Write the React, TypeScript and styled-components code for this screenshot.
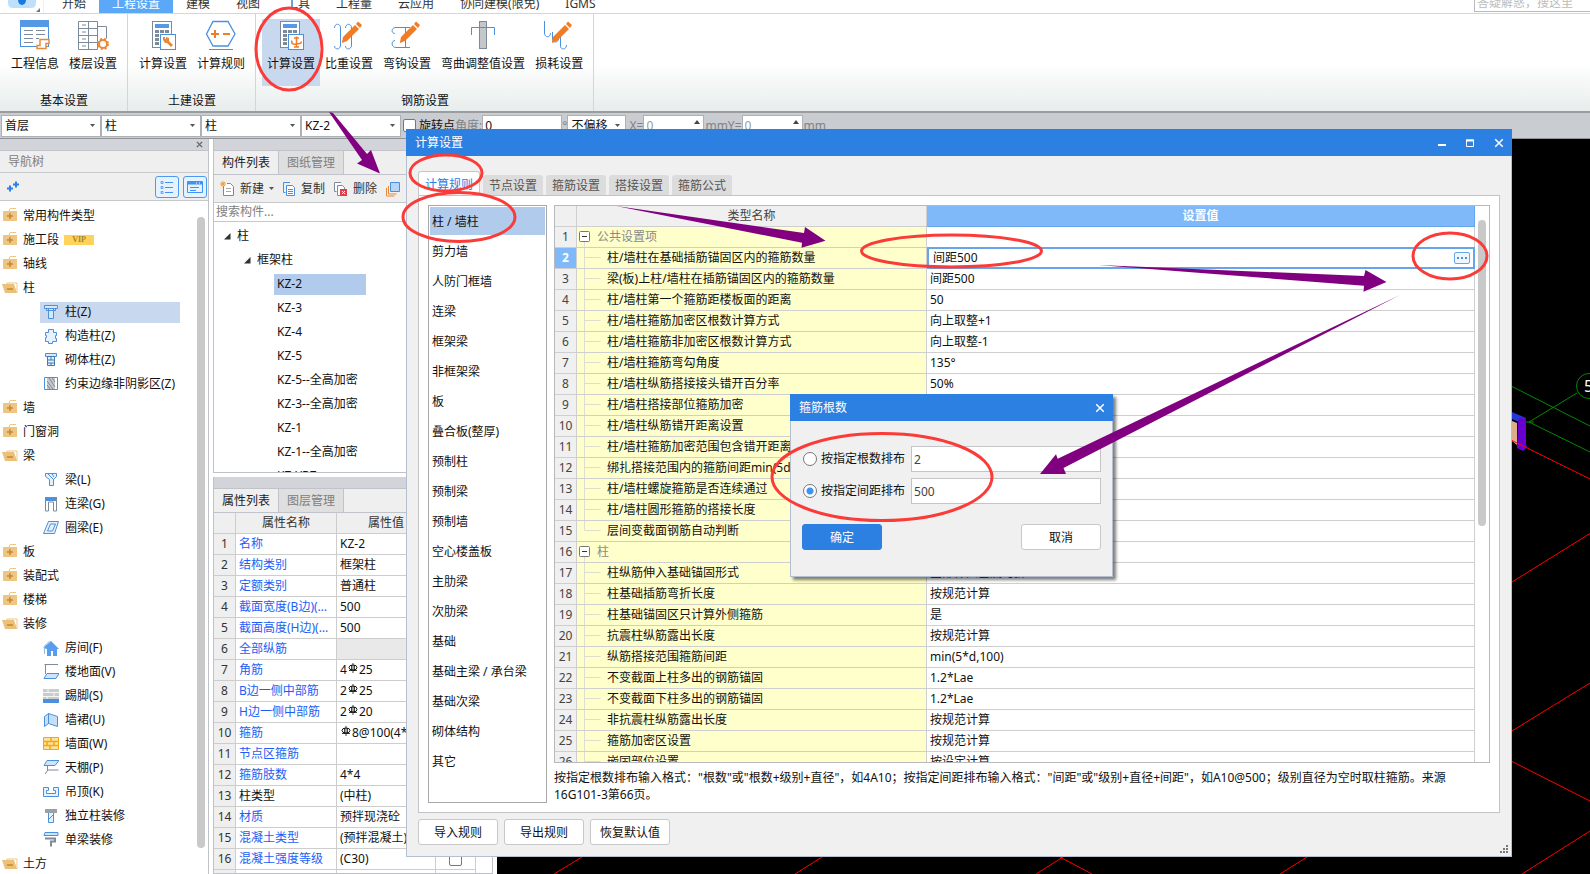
import React from "react";
import styled, { createGlobalStyle, css } from "styled-components";

const Global = createGlobalStyle`
  *, *::before, *::after { box-sizing: border-box; }
  body { margin: 0; overflow: hidden; }
  body, button, input, select, table {
    font-family: "Noto Sans", "Noto Sans CJK SC", sans-serif;
    font-size: 12px;
    line-height: 20px;
    color: #111;
  }
  button, input, select { margin: 0; padding: 0; border: 0; background: none; outline: none; }
  ul { list-style: none; margin: 0; padding: 0; }
`;

/* ---------- page frame ---------- */

const Page = styled.div`
  position: relative;
  display: flex;
  flex-direction: column;
  height: 100vh;
  overflow: hidden;
  background: #fff;
`;

const MenuBar = styled.nav`
  flex: none;
  display: flex;
  height: 14px;
  overflow: hidden;
  align-items: flex-end;
  border-bottom: 1px solid #d4d6d8;
`;

const Logo = styled.div`
  width: 49px;
  height: 14px;
  svg { display: block; }
`;

const MenuTab = styled.button<{ $active?: boolean }>`
  flex: none;
  height: 19px;
  padding: 0 13px;
  line-height: 20px;
  white-space: nowrap;
  color: ${(p) => (p.$active ? "#fff" : "#333")};
  background: ${(p) => (p.$active ? "#5ba7f8" : "transparent")};
`;

const HelpSearch = styled.input`
  width: 116px;
  height: 19px;
  margin-left: auto;
  margin-bottom: 1px;
  padding: 0 2px;
  border: 1px solid #b9b9b9;
  border-right: 0;
  &::placeholder { color: #bcbcbc; opacity: 1; }
`;

/* ---------- ribbon ---------- */

const Ribbon = styled.div`
  flex: none;
  display: flex;
  height: 99px;
  background: linear-gradient(#fff 50%, #e7edec);
  border-bottom: 2px solid #9a9c9e;
`;

const RibbonGroup = styled.section`
  display: flex;
  flex-direction: column;
  padding: 5px 5px 0 6px;
  border-right: 1px solid #d3d6d7;
`;

const RibbonButtons = styled.div`
  display: flex;
`;

const RibbonButton = styled.button<{ $active?: boolean }>`
  display: flex;
  flex-direction: column;
  align-items: center;
  height: 67px;
  padding: 0 5px;
  white-space: nowrap;
  background: ${(p) => (p.$active ? "#c8d8ef" : "transparent")};
  svg { display: block; margin-bottom: 1px; }
`;

const GroupName = styled.div`
  padding-top: 5px;
  text-align: center;
`;

/* ---------- option bar ---------- */

const OptionBar = styled.div`
  flex: none;
  display: flex;
  align-items: center;
  height: 26px;
  padding-left: 1px;
  white-space: nowrap;
  background: #c9ccd1;
  border-bottom: 1px solid #8f9296;
`;

const SelectWrap = styled.span<{ $w: number }>`
  display: grid;
  align-items: center;
  width: ${(p) => p.$w}px;
  > * { grid-area: 1 / 1; }
  > svg { justify-self: end; margin-right: 6px; pointer-events: none; }
`;

const Select = styled.select`
  appearance: none;
  width: 100%;
  height: 22px;
  padding-left: 3px;
  background: #fff;
  border: 1px solid #adb0b5;
`;

const RotateLabel = styled.label`
  display: flex;
  align-items: center;
  gap: 3px;
  margin-left: 2px;
`;

const CheckBox = styled.input`
  appearance: none;
  width: 13px;
  height: 13px;
  background: #fff;
  border: 1px solid #777;
  border-radius: 2px;
`;

const FieldLabel = styled.label`
  display: flex;
  align-items: center;
  color: #808388;
`;

const NumberBox = styled.input<{ $w: number; $dim?: boolean }>`
  width: ${(p) => p.$w}px;
  height: 22px;
  padding-left: 2px;
  background: #fff;
  border: 1px solid #adb0b5;
  color: ${(p) => (p.$dim ? "#9a9a9a" : "#111")};
`;

const SpinWrap = styled.span`
  display: grid;
  margin-right: 1px;
  > * { grid-area: 1 / 1; }
  > svg { justify-self: end; margin: 5px 4px 0 0; }
`;

/* ---------- docked panels ---------- */

const Workspace = styled.main`
  flex: 1;
  display: flex;
  min-height: 0;
`;

const NavPanel = styled.aside`
  flex: none;
  display: flex;
  flex-direction: column;
  width: 209px;
  min-height: 0;
  border-right: 1px solid #bfc2c7;
`;

const PanelStrip = styled.div`
  flex: none;
  display: flex;
  justify-content: flex-end;
  align-items: center;
  height: 12px;
  padding-right: 5px;
  background: #d2d4d9;
  border-bottom: 1px solid #c0c3c9;
`;

const CloseMini = styled.button`
  display: flex;
  svg { display: block; }
`;

const NavTitle = styled.div`
  flex: none;
  height: 22px;
  padding-left: 8px;
  line-height: 22px;
  color: #808080;
  background: #efefef;
  border-bottom: 1px solid #c6c9cc;
`;

const NavTools = styled.div`
  flex: none;
  display: flex;
  align-items: center;
  height: 28px;
  padding: 0 1px 0 6px;
  gap: 4px;
  background: #efefef;
  border-bottom: 1px solid #c6c9cc;
`;

const AddMark = styled.button`
  margin-right: auto;
  svg { display: block; }
`;

const ViewToggle = styled.button`
  display: grid;
  place-items: center;
  width: 24px;
  height: 22px;
  background: #e6f2ff;
  border: 1px solid #4a9af0;
  border-radius: 3px;
`;

const NavBody = styled.div`
  flex: 1;
  display: flex;
  min-height: 0;
  padding-top: 3px;
  overflow: hidden;
`;

const NavList = styled.ul`
  flex: 1;
`;

const NavRow = styled.li<{ $child?: boolean; $active?: boolean }>`
  display: flex;
  align-items: center;
  height: 24px;
  gap: 5px;
  padding-left: ${(p) => (p.$child ? 40 : 2)}px;
  white-space: nowrap;
  > span.entry {
    display: flex;
    align-items: center;
    gap: ${(p) => (p.$child ? 6 : 5)}px;
    width: ${(p) => (p.$child ? "140px" : "auto")};
    height: 21px;
    padding-left: ${(p) => (p.$child ? 3 : 0)}px;
    background: ${(p) => (p.$active ? "#c8d8ef" : "transparent")};
  }
  svg { flex: none; }
`;

const Vip = styled.span`
  width: 30px;
  height: 10px;
  background: #ffd25c;
  color: #a88528;
  font: bold 8px/10px "Liberation Serif", serif;
  text-align: center;
`;

const ScrollThumb = styled.div<{ $top: number; $bottom: number; $w: number }>`
  flex: none;
  width: ${(p) => p.$w}px;
  margin: ${(p) => p.$top}px 3px ${(p) => p.$bottom}px 3px;
  background: #c9c9c9;
  border-radius: 4px;
`;

const MidColumn = styled.div`
  flex: none;
  display: flex;
  flex-direction: column;
  gap: 4px;
  width: 280px;
  margin: 0 4px;
  min-height: 0;
`;

const DockPanel = styled.section<{ $h?: number }>`
  display: flex;
  flex-direction: column;
  flex: ${(p) => (p.$h ? "none" : "1")};
  height: ${(p) => (p.$h ? `${p.$h}px` : "auto")};
  min-height: 0;
  overflow: hidden;
  border: 1px solid #bfc2c7;
  border-top: 0;
  background: #fff;
`;

const DockTabs = styled.div`
  flex: none;
  display: flex;
  height: 24px;
  background: #efefef;
  border-bottom: 1px solid #c0c3c9;
`;

const DockTab = styled.button<{ $active?: boolean }>`
  height: 23px;
  padding: 1px 8px 0;
  color: ${(p) => (p.$active ? "#222" : "#808080")};
  background: ${(p) => (p.$active ? "#efefef" : "#dfdfdf")};
  border-right: 1px solid #c0c3c9;
`;

const ListTools = styled.div`
  flex: none;
  display: flex;
  align-items: center;
  height: 28px;
  padding-left: 6px;
  white-space: nowrap;
  background: #efefef;
  border-bottom: 1px solid #c6c9cc;
`;

const ToolButton = styled.button`
  display: flex;
  align-items: center;
  gap: 5px;
  margin-right: 8px;
  color: #333;
`;

const SearchBox = styled.input`
  flex: none;
  width: 100%;
  height: 19px;
  padding-left: 2px;
  border-bottom: 1px solid #c6c9cc;
  &::placeholder { color: #808080; opacity: 1; }
`;

const PartTree = styled.ul`
  padding-top: 2px;
`;

const PartRow = styled.li<{ $level: number; $active?: boolean }>`
  display: flex;
  align-items: center;
  gap: 6px;
  height: 24px;
  padding-left: ${(p) => [10, 30, 60][p.$level]}px;
  white-space: nowrap;
  > span {
    height: 21px;
    ${(p) => p.$level === 2 && css`width: 92px; padding-left: 3px;`}
    background: ${(p) => (p.$active ? "#b1cbed" : "transparent")};
  }
`;

const PropTable = styled.table`
  table-layout: fixed;
  width: 262px;
  border-collapse: separate;
  border-spacing: 0;
  th, td {
    height: 21px;
    padding: 0 3px;
    font-weight: normal;
    overflow: hidden;
    text-overflow: ellipsis;
    white-space: nowrap;
    border-right: 1px solid #cdcdcd;
    border-bottom: 1px solid #cdcdcd;
  }
  th { background: #efefef; color: #333; text-align: center; padding: 0; }
  td:last-child { text-align: center; }
  td input { vertical-align: middle; }
`;

const PropName = styled.td<{ $plain?: boolean }>`
  color: ${(p) => (p.$plain ? "#111" : "#1c5ef5")};
`;

const PropValue = styled.td<{ $shade?: boolean }>`
  background: ${(p) => (p.$shade ? "#e9e9e9" : "#fff")};
`;

const Viewport = styled.div`
  flex: 1;
  min-width: 0;
  overflow: hidden;
  background: #000;
  svg { display: block; }
`;

/* ---------- main dialog ---------- */

const Dialog = styled.section`
  position: absolute;
  top: 129px;
  left: 406px;
  right: 78px;
  bottom: 17px;
  display: flex;
  flex-direction: column;
  background: #f0f0f0;
  border: 1px solid #b4c0d2;
  border-top: 0;
`;

const TitleBar = styled.header`
  flex: none;
  display: flex;
  align-items: center;
  height: 27px;
  margin: 0 -1px;
  padding: 0 8px 0 9px;
  gap: 18px;
  color: #fff;
  background: #2c80e2;
  > span { margin-right: auto; }
`;

const WindowButton = styled.button`
  width: 10px;
  height: 10px;
  svg { display: block; }
`;

const DialogBody = styled.div`
  flex: 1;
  display: flex;
  flex-direction: column;
  min-height: 0;
  padding: 15px 11px 0;
`;

const TabRow = styled.div`
  flex: none;
  display: flex;
  align-items: flex-end;
  gap: 3px;
  height: 24px;
`;

const RuleTab = styled.button<{ $active?: boolean }>`
  height: 20px;
  padding: 1px 6px 0;
  line-height: 19px;
  color: #555;
  background: #dcdcdc;
  border-radius: 3px 3px 0 0;
  ${(p) => p.$active && css`
    height: 24px;
    color: #2c80e2;
    background: #fff;
    border: 1px solid #c6c6c6;
    border-bottom: 0;
  `}
`;

const RulePanel = styled.div`
  flex: 1;
  display: flex;
  gap: 7px;
  min-height: 0;
  padding: 9px;
  background: #fff;
  border: 1px solid #c3c3c8;
`;

const KindList = styled.ul`
  flex: none;
  width: 119px;
  padding: 1px;
  border: 1px solid #a9a9a9;
`;

const KindRow = styled.li<{ $active?: boolean }>`
  height: 30px;
  padding-left: 2px;
  line-height: 30px;
  background: ${(p) => (p.$active ? "linear-gradient(#b1cbed 28px, #fff 28px)" : "transparent")};
  white-space: nowrap;
`;

const RuleColumn = styled.div`
  flex: 1;
  display: flex;
  flex-direction: column;
  min-width: 0;
`;

const GridBox = styled.div`
  flex: 1;
  display: flex;
  align-items: stretch;
  min-height: 0;
  overflow: hidden;
  border: 1px solid #b9b9bd;
`;

const GridHolder = styled.div`
  flex: 1;
  min-width: 0;
`;

const RuleTable = styled.table`
  table-layout: fixed;
  width: 100%;
  border-collapse: separate;
  border-spacing: 0;
  th, td {
    height: 21px;
    padding: 0;
    font-weight: normal;
    white-space: nowrap;
    border-right: 1px solid #cfcfcf;
    border-bottom: 1px solid #cfcfcf;
  }
  thead th {
    color: #444;
    background: #f0f0f0;
  }
  thead th:last-child {
    color: #fff;
    font-weight: bold;
    background: #80b9f9;
    border-color: #66a5ea;
  }
`;

const IndexCell = styled.td<{ $active?: boolean }>`
  text-align: center;
  color: ${(p) => (p.$active ? "#fff" : "#444")};
  font-weight: ${(p) => (p.$active ? "bold" : "normal")} !important;
  background: ${(p) => (p.$active ? "#80b9f9" : "#f0f0f0")};
`;

const NameCell = styled.td`
  background: #ffffcb;
  > div { display: flex; align-items: center; height: 20px; }
  svg { flex: none; display: block; }
`;

const GroupText = styled.span`
  color: #8a8a8a;
  padding-left: 6px;
`;

const ValueCell = styled.td<{ $active?: boolean }>`
  > div {
    display: flex;
    align-items: center;
    justify-content: space-between;
    height: 20px;
    padding-left: 3px;
    ${(p) => p.$active && css`
      height: 22px;
      margin: -1px -1px -1px 0;
      padding: 0 3px 0 4px;
      border: 2px solid #66a5ea;
    `}
  }
`;

const MoreButton = styled.button`
  display: flex;
  align-items: center;
  justify-content: center;
  gap: 2px;
  width: 16px;
  height: 12px;
  background: #eef6ff;
  border: 1px solid #66a5ea;
  border-radius: 2px;
  i { width: 2px; height: 2px; background: #4a90d9; }
`;

const Hint = styled.p`
  flex: none;
  height: 40px;
  margin: 0;
  padding-top: 6px;
  line-height: 17px;
`;

const Footer = styled.footer`
  flex: none;
  display: flex;
  align-items: flex-start;
  gap: 6px;
  height: 43px;
  padding-top: 6px;
`;

const Button = styled.button<{ $primary?: boolean }>`
  width: 80px;
  height: 26px;
  padding-top: 1px;
  border: 1px solid ${(p) => (p.$primary ? "#2c80e2" : "#c8c8c8")};
  border-radius: 3px;
  color: ${(p) => (p.$primary ? "#fff" : "#111")};
  background: ${(p) => (p.$primary ? "#2c80e2" : "#fff")};
`;

const Grip = styled.svg`
  align-self: flex-end;
  margin: 0 -8px 3px auto;
`;

/* ---------- small dialog ---------- */

const CountDialog = styled.form`
  position: absolute;
  top: 394px;
  left: 790px;
  width: 323px;
  background: #f0f0f0;
  border: 1px solid #b4c0d2;
  border-top: 0;
  box-shadow: 3px 3px 3px rgba(0, 0, 0, 0.5);
`;

const CountBody = styled.div`
  display: flex;
  flex-direction: column;
  gap: 6px;
  padding: 25px 11px 26px;
`;

const CountRow = styled.div`
  display: flex;
  align-items: center;
  gap: 6px;
  padding-left: 1px;
  label { display: flex; align-items: center; gap: 4px; white-space: nowrap; }
`;

const Radio = styled.input`
  appearance: none;
  width: 14px;
  height: 14px;
  border: 1px solid #777;
  border-radius: 50%;
  background: #fff;
  &:checked { background: radial-gradient(circle, #3f93f5 0 3px, #fff 4px); }
`;

const CountInput = styled.input`
  flex: 1;
  min-width: 0;
  height: 26px;
  padding-left: 2px;
  color: #444;
  background: #fff;
  border: 1px solid #c3c3c8;
`;

const CountActions = styled.div`
  display: flex;
  justify-content: space-between;
  padding-top: 14px;
`;

const Annotations = styled.svg`
  position: absolute;
  top: 0;
  left: 0;
  pointer-events: none;
`;

/* ---------- icons ---------- */

const B = "#4a90dc";
const G = "#7c8a99";
const O = "#e8893a";

const Caret = () => (
  <svg width="5" height="3"><path d="M0 0h5L2.500 3z" fill="#555" /></svg>
);
const SpinUp = () => (
  <svg width="6" height="4"><path d="M3 0l3 4H0z" fill="#444" /></svg>
);
const Cross = ({ size = 8, color = "#fff", w = 1.6 }: { size?: number; color?: string; w?: number }) => (
  <svg width={size} height={size} viewBox="0 0 8 8"><path d="M1 1l6 6M7 1L1 7" stroke={color} strokeWidth={w} /></svg>
);

const Calculator = ({ children }: { children: React.ReactNode }) => (
  <svg width="30" height="34" viewBox="0 0 30 34" fill="none">
    <rect x="4.500" y="2.500" width="19" height="26" fill="#fff" stroke={G} />
    <rect x="7" y="5" width="14" height="4" fill="#5599e6" />
    <g fill={G}>
      {[11, 15, 19, 23].map((y) => [7, 12, 17].map((x) => <rect key={`${x}${y}`} x={x} y={y} width="4" height="3" />))}
    </g>
    <rect x="12.500" y="15.500" width="15" height="15" fill="#fff" stroke={B} />
    {children}
  </svg>
);

const Pencil = () => (
  <g fill="#f07c28" stroke="none">
    <path d="M9 23l1-5L22 6l4 4-12 12-5 2z" />
    <path d="M23 5l2-2.500 4 3.500-2 3z" />
  </g>
);

const ribbonIcons: Record<string, React.ReactNode> = {
  info: (
    <svg width="32" height="34" viewBox="0 0 32 34" fill="none">
      <rect x="1.500" y="2.500" width="28" height="25" fill="#fff" stroke={B} />
      <path d="M1 1h29v7H1z" fill="#5599e6" />
      <path d="M5 11.500h9M17 11.500h9M5 15.500h9M17 15.500h9M5 19.500h9M17 19.500h3M5 23.500h9" stroke={G} />
      <path d="M21 20.500h9v4h-3v5h-9v-3h3z" fill="#fff" stroke={O} strokeWidth="1.500" />
    </svg>
  ),
  floors: (
    <svg width="32" height="34" viewBox="0 0 32 34" fill="none">
      <path d="M1.500 2.500h19v28h-19zM1.500 9.500h19M1.500 16.500h19M1.500 23.500h19M11.500 2.500v28M20.500 7.500h9v12M5 6h4M5 13h4M5 20h4M5 27h4" stroke={G} />
      <circle cx="26" cy="25" r="4" fill="#fff" stroke={O} strokeWidth="2" />
      <circle cx="26" cy="25" r="5" stroke={O} strokeWidth="2" strokeDasharray="2 2" />
    </svg>
  ),
  wrench: (
    <Calculator><path d="M15 18h2v2h1v-2l3 1v3l4 4-2 2-4-4h-2l-2-3z" fill={O} /></Calculator>
  ),
  rule: (
    <svg width="32" height="34" viewBox="0 0 32 34" fill="none">
      <path d="M8 2.500h15L30 15l-7 12H8L1.500 15z" stroke={B} strokeWidth="1.300" />
      <path d="M6 15h8M10 11v8M18 15h7" stroke="#f07c28" strokeWidth="2" />
      <path d="M4 30.500h24" stroke={B} />
    </svg>
  ),
  rebar: (
    <Calculator><path d="M20.500 17.500v11M16 21.500c-1 3 1 4 4 3.500s6 0 5-2.500M18 19h5M18 28h5" stroke="#f07c28" strokeWidth="1.500" /></Calculator>
  ),
  weight: (
    <svg width="32" height="34" viewBox="0 0 32 34" fill="none" stroke={B}>
      <path d="M1.500 9c0-5 6-5 6 0v17c0 5-6 5-6 1M12.500 9c0-5 6-5 6 0v17c0 5-6 5-6 1" /><Pencil />
    </svg>
  ),
  hook: (
    <svg width="32" height="34" viewBox="0 0 32 34" fill="none" stroke={B}>
      <path d="M19 8.500H5c-5 0-5 6-1 6M19 28.500H5c-5 0-5-7-1-7M14.500 8v21M12 17.500h6" /><Pencil />
    </svg>
  ),
  bend: (
    <svg width="32" height="34" viewBox="0 0 32 34" fill="none">
      <rect x="12.500" y="2.500" width="7" height="27" fill="#c4c7ca" stroke={G} />
      <path d="M4.500 16V8.500h23V16" stroke={B} />
    </svg>
  ),
  loss: (
    <svg width="32" height="34" viewBox="0 0 32 34" fill="none" stroke={B}>
      <path d="M1.500 2v12c0 5 6 5 6 0M9.500 13v7c0 4 6 4 6 0M17.500 16v11c0 4 6 4 6-1" /><Pencil />
    </svg>
  ),
};

const FolderClosed = () => (
  <svg width="16" height="16" viewBox="0 0 16 16">
    <path d="M1 3h14v10H1zM8 0h6v1H8zM7 1h1v2H7z" fill="#efc681" />
    <path d="M8 5v6M5 8h6" stroke="#c08a34" strokeWidth="1.500" />
  </svg>
);
const FolderOpen = () => (
  <svg width="16" height="16" viewBox="0 0 16 16">
    <path d="M5 4V3h10v10" fill="none" stroke="#efc681" /><path d="M0 4h12l3 9H3z" fill="#ecc078" />
    <path d="M5 9h6" stroke="#c08a34" strokeWidth="1.500" />
  </svg>
);

const partIcons: Record<string, React.ReactNode> = {
  column: <path d="M1.500 1.500h13v3h-13zM5.500 5v9.500h5V5M3.500 4.500v2h9v-2" fill="#d8e8fa" stroke={B} />,
  frame: <path d="M5.500 1.500h5v3h3v3h-1v3h1v3h-4v2h-4v-2h-3v-4h1v-2h-1v-3h3z" fill="#e8f2fd" stroke={B} />,
  brick: <><path d="M2.500 1.500h11v3h-11z" fill="#d8e8fa" stroke={B} /><path d="M4.500 4.500h7v9h-7zM4.500 8h7M4.500 11h7M8 5v3M8 11v3" fill="#e6effa" stroke="#3f78b8" /></>,
  hatch: <><path d="M1.500 1.500h13v12h-13z" fill="#fff" stroke={B} /><path d="M4 2h8v11H4z" fill="#c5c8cc" /><path d="M4 5l6 8M4 9l3 4M6 2l6 9M9 2l3 4" stroke="#858a90" /></>,
  beamL: <path d="M2.500 1.500h11v3l-3 3v6h-4v-6l-4-3zM5 2l6 6M9 2l2 3" fill="#e6f1fc" stroke={B} />,
  beamG: <><path d="M2 1h12v4H2z" fill={B} /><path d="M2.500 5v10h3V6h5v9h3V1.500h-11z" fill="none" stroke={G} /></>,
  ring: <path d="M5.500 1.500h10l-4 12h-11zM7.500 4h5l-3 7h-5z" fill="#e6f1fc" stroke={B} />,
  room: <><path d="M0 8l8-7 8 8h-2v7h-4v-5H8v5H4V9z" fill="#5a9dec" /><path d="M1.500 14V6l5-5" fill="none" stroke="#8abbf2" /></>,
  floor: <><path d="M15 .500H1.500M2.500 1v9" fill="none" stroke={G} /><path d="M4 9.500h12l-3 5H1z" fill="#cfe4fb" stroke={B} /></>,
  skirt: <><path d="M0 1h16v10H0z" fill="#c9cbcd" /><path d="M0 4.500h16M0 8.500h16M5 1v3M11 5v3M4 9v3" stroke="#f5f5f5" /><path d="M0 11h16v4H0z" fill="#4a90dc" /></>,
  dado: <path d="M1.500 4.500l4-3v10l-4 3zM5.500 1.500l9 3v10l-9-3z" fill="#c5defa" stroke={B} />,
  wall: <><path d="M.500 1.500h15v12h-15z" fill="#ffe29a" stroke="#f3a712" /><path d="M1 5.500h14M1 9.500h14M8 2v3M4 6v3M11 6v3M7 10v4" stroke="#f3a712" strokeWidth="1.500" /></>,
  ceiling: <><path d="M4 .500h12l-4 5H1z" fill="#cfe4fb" stroke={B} /><path d="M4.500 6v4h11M2 14l3-4" fill="none" stroke={G} /></>,
  hang: <path d="M.500 3.500h5v3h-2v3h9v-3h-2v-3h5v9H.500z" fill="#e6f1fc" stroke={B} />,
  columnFit: <><path d="M2 1h12v4H2z" fill="#9ba1a8" /><path d="M5.500 5v9.500h5V5M5 12l5-5" fill="#e6f1fc" stroke={B} /></>,
  beamFit: <><path d="M2 .500h13v3H1z" fill="#cfe4fb" stroke={B} /><path d="M2 6.500h10v3H8v5" fill="none" stroke={G} strokeWidth="2" /></>,
};

/* rebar grade mark used in front of a bar diameter */
const Grade = () => (
  <svg width="12" height="11" viewBox="0 0 12 11" fill="none" stroke="#111">
    <ellipse cx="6" cy="4.500" rx="4" ry="2.500" /><path d="M6 0v10M2 7.500h8M4.500 2v6M7.500 2v6" strokeWidth=".8" />
  </svg>
);

/* ---------- data ---------- */

const menu = ["开始", "工程设置", "建模", "视图", "工具", "工程量", "云应用", "协同建模(限免)", "IGMS"];

const groups = [
  { name: "基本设置", items: [["工程信息", "info"], ["楼层设置", "floors"]] },
  { name: "土建设置", items: [["计算设置", "wrench"], ["计算规则", "rule"]] },
  { name: "钢筋设置", items: [["计算设置", "rebar"], ["比重设置", "weight"], ["弯钩设置", "hook"], ["弯曲调整值设置", "bend"], ["损耗设置", "loss"]] },
];

type NavItem = { t: string; open?: boolean; icon?: string; vip?: boolean };
const nav: NavItem[] = [
  { t: "常用构件类型" }, { t: "施工段", vip: true }, { t: "轴线" },
  { t: "柱", open: true },
  { t: "柱(Z)", icon: "column" }, { t: "构造柱(Z)", icon: "frame" }, { t: "砌体柱(Z)", icon: "brick" }, { t: "约束边缘非阴影区(Z)", icon: "hatch" },
  { t: "墙" }, { t: "门窗洞" }, { t: "梁", open: true },
  { t: "梁(L)", icon: "beamL" }, { t: "连梁(G)", icon: "beamG" }, { t: "圈梁(E)", icon: "ring" },
  { t: "板" }, { t: "装配式" }, { t: "楼梯" }, { t: "装修", open: true },
  { t: "房间(F)", icon: "room" }, { t: "楼地面(V)", icon: "floor" }, { t: "踢脚(S)", icon: "skirt" }, { t: "墙裙(U)", icon: "dado" },
  { t: "墙面(W)", icon: "wall" }, { t: "天棚(P)", icon: "ceiling" }, { t: "吊顶(K)", icon: "hang" },
  { t: "独立柱装修", icon: "columnFit" }, { t: "单梁装修", icon: "beamFit" }, { t: "土方", open: true },
];

const parts: [string, number][] = [
  ["柱", 0], ["框架柱", 1], ["KZ-2", 2], ["KZ-3", 2], ["KZ-4", 2], ["KZ-5", 2], ["KZ-5--全高加密", 2],
  ["KZ-3--全高加密", 2], ["KZ-1", 2], ["KZ-1--全高加密", 2], ["KZ-YBZ", 2],
];

const props: [string, React.ReactNode][] = [
  ["名称", "KZ-2"], ["结构类别", "框架柱"], ["定额类别", "普通柱"], ["截面宽度(B边)(mm)", "500"], ["截面高度(H边)(mm)", "500"],
  ["全部纵筋", ""], ["角筋", <>4<Grade />25</>], ["B边一侧中部筋", <>2<Grade />25</>], ["H边一侧中部筋", <>2<Grade />20</>],
  ["箍筋", <><Grade />8@100(4*4)</>], ["节点区箍筋", ""], ["箍筋肢数", "4*4"], ["柱类型", "(中柱)"], ["材质", "预拌现浇砼"],
  ["混凝土类型", "(预拌混凝土)"], ["混凝土强度等级", "(C30)"], ["", ""],
];

const ruleTabs = ["计算规则", "节点设置", "箍筋设置", "搭接设置", "箍筋公式"];

const kinds = ["柱 / 墙柱", "剪力墙", "人防门框墙", "连梁", "框架梁", "非框架梁", "板", "叠合板(整厚)", "预制柱", "预制梁", "预制墙",
  "空心楼盖板", "主肋梁", "次肋梁", "基础", "基础主梁 / 承台梁", "基础次梁", "砌体结构", "其它"];

type Rule = { n: string; v?: string; group?: boolean; last?: boolean };
const rules: Rule[] = [
  { n: "公共设置项", group: true },
  { n: "柱/墙柱在基础插筋锚固区内的箍筋数量", v: "间距500" },
  { n: "梁(板)上柱/墙柱在插筋锚固区内的箍筋数量", v: "间距500" },
  { n: "柱/墙柱第一个箍筋距楼板面的距离", v: "50" },
  { n: "柱/墙柱箍筋加密区根数计算方式", v: "向上取整+1" },
  { n: "柱/墙柱箍筋非加密区根数计算方式", v: "向上取整-1" },
  { n: "柱/墙柱箍筋弯勾角度", v: "135°" },
  { n: "柱/墙柱纵筋搭接接头错开百分率", v: "50%" },
  { n: "柱/墙柱搭接部位箍筋加密" },
  { n: "柱/墙柱纵筋错开距离设置" },
  { n: "柱/墙柱箍筋加密范围包含错开距离" },
  { n: "绑扎搭接范围内的箍筋间距min(5d,100)" },
  { n: "柱/墙柱螺旋箍筋是否连续通过" },
  { n: "柱/墙柱圆形箍筋的搭接长度" },
  { n: "层间变截面钢筋自动判断", last: true },
  { n: "柱", group: true },
  { n: "柱纵筋伸入基础锚固形式", v: "全部伸入基底弯折" },
  { n: "柱基础插筋弯折长度", v: "按规范计算" },
  { n: "柱基础锚固区只计算外侧箍筋", v: "是" },
  { n: "抗震柱纵筋露出长度", v: "按规范计算" },
  { n: "纵筋搭接范围箍筋间距", v: "min(5*d,100)" },
  { n: "不变截面上柱多出的钢筋锚固", v: "1.2*Lae" },
  { n: "不变截面下柱多出的钢筋锚固", v: "1.2*Lae" },
  { n: "非抗震柱纵筋露出长度", v: "按规范计算" },
  { n: "箍筋加密区设置", v: "按规范计算" },
  { n: "嵌固部位设置", v: "按设定计算" },
];

const TreeBranch = ({ group, last }: { group?: boolean; last?: boolean }) =>
  group ? (
    <svg width="14" height="20" fill="none">
      <path d="M7.500 15v5" stroke="#ddd" />
      <rect x="2.500" y="4.500" width="10" height="10" rx="1" fill="#fff" stroke="#777" />
      <path d="M5 9.500h5" stroke="#333" />
    </svg>
  ) : (
    <svg width="30" height="20" fill="none">
      <path d={last ? "M7.500 0v9.500h16" : "M7.500 0v20M7.500 9.500h16"} stroke="#ddddd0" />
    </svg>
  );

const Combo = ({ w, value }: { w: number; value: string }) => (
  <SelectWrap $w={w}>
    <Select aria-label={value} defaultValue={value}><option>{value}</option></Select>
    <Caret />
  </SelectWrap>
);

export default function App() {
  return (
    <Page>
      <Global />
      <MenuBar>
        <Logo>
          <svg width="44" height="14">
            <path d="M8 0h28v4q0 5-5 5H13q-5 0-5-5z" fill="#bfe0fb" />
            <ellipse cx="22" cy="1" rx="4" ry="5" fill="#1979e0" />
            <path d="M40 9v4h-4z" fill="#777" /><path d="M44 0v14" stroke="#ddd" />
          </svg>
        </Logo>
        {menu.map((m, i) => <MenuTab key={m} $active={i === 1}>{m}</MenuTab>)}
        <HelpSearch aria-label="搜索" placeholder="答疑解惑，搜这里" />
      </MenuBar>

      <Ribbon>
        {groups.map((g) => (
          <RibbonGroup key={g.name}>
            <RibbonButtons>
              {g.items.map(([label, icon]) => (
                <RibbonButton key={icon} $active={icon === "rebar"}>{ribbonIcons[icon]}{label}</RibbonButton>
              ))}
            </RibbonButtons>
            <GroupName>{g.name}</GroupName>
          </RibbonGroup>
        ))}
      </Ribbon>

      <OptionBar>
        <Combo w={100} value="首层" /><Combo w={100} value="柱" /><Combo w={100} value="柱" /><Combo w={100} value="KZ-2" />
        <RotateLabel><CheckBox type="checkbox" />旋转点</RotateLabel>
        <FieldLabel>角度:<NumberBox $w={80} defaultValue="0" />°</FieldLabel>
        <Combo w={59} value="不偏移" />
        <FieldLabel>&nbsp;X=<SpinWrap><NumberBox $w={61} $dim defaultValue="0" /><SpinUp /></SpinWrap>mm</FieldLabel>
        <FieldLabel>Y=<SpinWrap><NumberBox $w={61} $dim defaultValue="0" /><SpinUp /></SpinWrap>mm</FieldLabel>
      </OptionBar>

      <Workspace>
        <NavPanel>
          <PanelStrip><CloseMini aria-label="关闭"><Cross size={7} color="#666" /></CloseMini></PanelStrip>
          <NavTitle>导航树</NavTitle>
          <NavTools>
            <AddMark aria-label="添加">
              <svg width="14" height="12" stroke="#2c80e2" strokeWidth="2"><path d="M1 7.500h6M4 4.500v6M7 3.500h6M10 .500v6" /></svg>
            </AddMark>
            <ViewToggle aria-label="列表">
              <svg width="14" height="14" fill="none" stroke="#3f93f5"><path d="M5 2.500h8M5 7.500h8M5 12.500h8" /><path d="M1 1.500h2v2H1zM1 6.500h2v2H1zM1 11.500h2v2H1z" strokeWidth=".8" /></svg>
            </ViewToggle>
            <ViewToggle aria-label="面板">
              <svg width="16" height="14" fill="none" stroke="#3f93f5"><path d="M.500 1.500h15v11H.500zM3 7.500h9M3 10.500h6" /><path d="M1 3h14" strokeWidth="3" /><path d="M9 3h1M12 3h1" stroke="#fff" /></svg>
            </ViewToggle>
          </NavTools>
          <NavBody>
            <NavList>
              {nav.map((n) => (
                <NavRow key={n.t} $child={!!n.icon} $active={n.t === "柱(Z)"}>
                  <span className="entry">
                    {n.icon ? <svg width="16" height="16" viewBox="0 0 16 16">{partIcons[n.icon]}</svg> : n.open ? <FolderOpen /> : <FolderClosed />}
                    {n.t}
                  </span>
                  {n.vip && <Vip>VIP</Vip>}
                </NavRow>
              ))}
            </NavList>
            <ScrollThumb $top={13} $bottom={26} $w={8} />
          </NavBody>
        </NavPanel>

        <MidColumn>
          <DockPanel $h={334}>
            <PanelStrip />
            <DockTabs><DockTab $active>构件列表</DockTab><DockTab>图纸管理</DockTab></DockTabs>
            <ListTools>
              <ToolButton>
                <svg width="15" height="16" fill="none"><path d="M3.500 5v9.500h10v-9l-3-3H7" fill="#fff" stroke={G} /><path d="M6 7.500h5M6 10.500h5" stroke="#aaa" /><path d="M0 3h6M3 0v6M1 1l4 4M5 1L1 5" stroke="#f09a2e" /></svg>
                新建
                <Caret />
              </ToolButton>
              <ToolButton>
                <svg width="14" height="16" fill="none" stroke={B}><path d="M8 1.500H1.500v10h2" /><path d="M4.500 4.500h6l2 2v8h-8z" fill="#fff" /><path d="M6 8.500h5M6 10.500h5M6 12.500h5" /></svg>
                复制
              </ToolButton>
              <ToolButton>
                <svg width="15" height="16" fill="none" stroke={G}><path d="M8 1.500H1.500v9h2M4.500 4.500h5l2 2v8h-7z" fill="#fff" /><path d="M7 8h7v7H7z" fill="#d9444a" stroke="none" /><path d="M9 10l3 3M12 10l-3 3" stroke="#fff" /></svg>
                删除
              </ToolButton>
              <ToolButton aria-label="层间复制">
                <svg width="15" height="16" fill="none"><path d="M5.500 1.500h9v9h-9z" fill="#b5d6fa" stroke={B} /><path d="M3.500 5v8h8M1.500 7v8h8" stroke={O} /></svg>
              </ToolButton>
            </ListTools>
            <SearchBox aria-label="搜索构件" placeholder="搜索构件..." />
            <PartTree>
              {parts.map(([t, level]) => (
                <PartRow key={t} $level={level} $active={t === "KZ-2"}>
                  {level < 2 && <svg width="7" height="7"><path d="M6.500 0v6.500H0z" fill="#333" /></svg>}
                  <span>{t}</span>
                </PartRow>
              ))}
            </PartTree>
          </DockPanel>

          <DockPanel>
            <PanelStrip />
            <DockTabs><DockTab $active>属性列表</DockTab><DockTab>图层管理</DockTab></DockTabs>
            <PropTable>
              <colgroup><col width="22" /><col width="101" /><col width="99" /><col width="40" /></colgroup>
              <thead><tr><th /><th>属性名称</th><th>属性值</th><th /></tr></thead>
              <tbody>
                {props.map(([n, v], i) => (
                  <tr key={i}>
                    <th>{n && i + 1}</th>
                    <PropName $plain={n === "柱类型"} title={n}>{n}</PropName>
                    <PropValue $shade={n === "全部纵筋"}>{v}</PropValue>
                    <td>{i === 15 && <CheckBox type="checkbox" aria-label={n} />}</td>
                  </tr>
                ))}
              </tbody>
            </PropTable>
          </DockPanel>
        </MidColumn>

        <Viewport>
          <svg width="1093" height="735" viewBox="497 139 1093 735" fill="none">
            <g stroke="#008a00">
              <path d="M1512 386.500L1590 426M1529 422L1590 452M1577 393L1529 422M1526 422h8" />
              <circle cx="1589" cy="386" r="12.500" />
            </g>
            <path d="M1512 412l14 6-2 6-12-5z" fill="#2338d8" />
            <path d="M1512 421l5 2v22l-5-4z" fill="#d9ae88" />
            <path d="M1518 420l3-3 5 3v24l1 3-4 4-6-3z" fill="#6a00d0" />
            <g stroke="#ff0000">
              <path d="M1512 440.500L1590 479M1512 582L1590 533.500M1512 731L1590 683M1512 761.500L1590 801M1522 874L1590 831" />
              <path d="M554 874L582 857M795 874L822 857M1036 874L1063 857M1280 874L1307 857M1058 856L1092 874" />
            </g>
            <text x="1584" y="392" fill="#fff" fontSize="16" fontFamily="Noto Sans, sans-serif">5</text>
          </svg>
        </Viewport>
      </Workspace>

      <Dialog aria-label="计算设置">
        <TitleBar>
          <span>计算设置</span>
          <WindowButton aria-label="最小化"><svg width="8" height="10"><path d="M0 7h8" stroke="#fff" strokeWidth="2" /></svg></WindowButton>
          <WindowButton aria-label="最大化"><svg width="8" height="10" fill="none"><path d="M.500 2h7v6.500h-7z" stroke="#fff" /><path d="M0 2.500h8" stroke="#fff" strokeWidth="2" /></svg></WindowButton>
          <WindowButton aria-label="关闭"><Cross size={10} w={1.2} /></WindowButton>
        </TitleBar>
        <DialogBody>
          <TabRow>{ruleTabs.map((t, i) => <RuleTab key={t} $active={i === 0}>{t}</RuleTab>)}</TabRow>
          <RulePanel>
            <KindList>{kinds.map((k, i) => <KindRow key={k} $active={i === 0}>{k}</KindRow>)}</KindList>
            <RuleColumn>
              <GridBox>
                <GridHolder>
                  <RuleTable>
                    <colgroup><col width="22" /><col width="350" /><col /></colgroup>
                    <thead><tr><th /><th>类型名称</th><th>设置值</th></tr></thead>
                    <tbody>
                      {rules.map((r, i) => (
                        <tr key={i}>
                          <IndexCell $active={i === 1}>{i + 1}</IndexCell>
                          <NameCell>
                            <div>
                              <TreeBranch group={r.group} last={r.last} />
                              {r.group ? <GroupText>{r.n}</GroupText> : r.n}
                            </div>
                          </NameCell>
                          <ValueCell $active={i === 1}>
                            <div>
                              {r.v}
                              {i === 1 && <MoreButton aria-label="更多"><i /><i /><i /></MoreButton>}
                            </div>
                          </ValueCell>
                        </tr>
                      ))}
                    </tbody>
                  </RuleTable>
                </GridHolder>
                <ScrollThumb $top={14} $bottom={236} $w={8} />
              </GridBox>
              <Hint>
                按指定根数排布输入格式："根数"或"根数+级别+直径"，如4A10；按指定间距排布输入格式："间距"或"级别+直径+间距"，如A10@500；级别直径为空时取柱箍筋。来源16G101-3第66页。
              </Hint>
            </RuleColumn>
          </RulePanel>
          <Footer>
            <Button>导入规则</Button><Button>导出规则</Button><Button>恢复默认值</Button>
            <Grip width="8" height="8" fill="#777">
              <path d="M6 0h2v2H6zM3 3h2v2H3zM6 3h2v2H6zM0 6h2v2H0zM3 6h2v2H3zM6 6h2v2H6z" />
            </Grip>
          </Footer>
        </DialogBody>
      </Dialog>

      <CountDialog onSubmit={(e) => e.preventDefault()}>
        <TitleBar>
          <span>箍筋根数</span>
          <WindowButton type="button" aria-label="关闭"><Cross size={10} w={1.2} /></WindowButton>
        </TitleBar>
        <CountBody>
          <CountRow>
            <label><Radio type="radio" name="mode" />按指定根数排布</label>
            <CountInput aria-label="根数" defaultValue="2" />
          </CountRow>
          <CountRow>
            <label><Radio type="radio" name="mode" defaultChecked />按指定间距排布</label>
            <CountInput aria-label="间距" defaultValue="500" />
          </CountRow>
          <CountActions><Button $primary>确定</Button><Button type="button">取消</Button></CountActions>
        </CountBody>
      </CountDialog>

      <Annotations width="1590" height="874" fill="none">
        <g stroke="#fb3b38" strokeWidth="3">
          <ellipse cx="289" cy="49" rx="33" ry="41" />
          <ellipse cx="446" cy="173" rx="36" ry="18" />
          <ellipse cx="459" cy="217" rx="56" ry="24.500" />
          <ellipse cx="951.500" cy="251" rx="90" ry="16" />
          <ellipse cx="1450" cy="256" rx="37" ry="23" />
          <ellipse cx="882" cy="477" rx="110" ry="43.500" />
        </g>
        <g fill="#800080">
          <path d="M329 112L333 113L367 154L371 150L380 173.500L357 163.500L362 160z" />
          <path d="M616 206L804 233L805 227L825.500 240.700L801.500 247.700L802 242.700z" />
          <path d="M1098 265L1364 276L1365.500 270L1386.500 282L1363.500 291.700L1364 285.700z" />
          <path d="M1400 295L1063.500 468L1066 474L1040 474L1056 454.300L1057.700 458.700z" />
        </g>
      </Annotations>
    </Page>
  );
}
